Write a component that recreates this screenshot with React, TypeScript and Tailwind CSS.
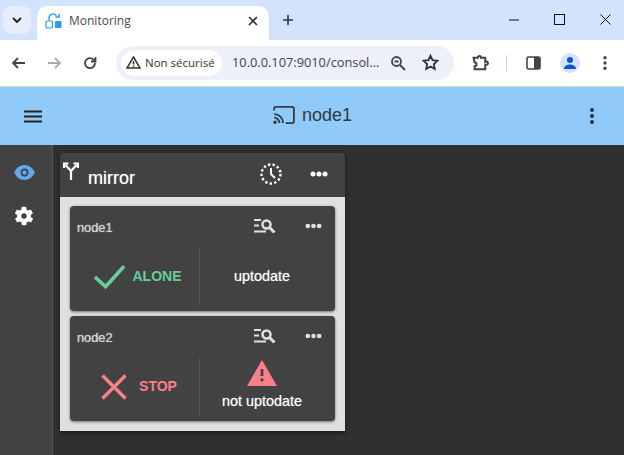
import React from "react";

const Dots = ({ c = "#fff", w = 18 }: { c?: string; w?: number }) => (
  <svg width={w} height={6} viewBox="0 0 18 6" fill={c}>
    <circle cx="3" cy="3" r="2.5" /><circle cx="9" cy="3" r="2.5" /><circle cx="15" cy="3" r="2.5" />
  </svg>
);

const VDots = ({ c = "#1f2937", h = 16 }: { c?: string; h?: number }) => (
  <svg width={4} height={h} viewBox="0 0 4 16" fill={c}>
    <circle cx="2" cy="2" r="1.9" /><circle cx="2" cy="8" r="1.9" /><circle cx="2" cy="14" r="1.9" />
  </svg>
);

const LogSearch = () => (
  <svg width="22" height="16" viewBox="0 0 22 16" fill="none" stroke="#e0e0e0">
    <path d="M0 2h7M0 7.500h5M0 13.500h12" strokeWidth="2" />
    <circle cx="12.500" cy="6.500" r="4" strokeWidth="2.500" />
    <path d="M15.500 9.500l5 5" strokeWidth="3" />
  </svg>
);

function NodeCard({ name, status, bad }: { name: string; status: string; bad?: boolean }) {
  return (
    <div className="h-[105px] rounded-[4px] bg-[#424242] shadow-[0_1px_3px_rgba(0,0,0,0.5)] flex flex-col">
      <div className="h-[42px] flex items-center pl-[7px] pr-[13px]">
        <span className="text-[#cfcfcf] text-[12.800px] flex-1 mt-[2px] [text-shadow:0_0_1px_rgba(255,255,255,0.8)]">{name}</span>
        <span className="mr-[29px] flex -mt-[2px]"><LogSearch /></span>
        <span className="flex -mt-[3px]"><Dots c="#e0e0e0" w={17} /></span>
      </div>
      <div className="flex h-[57px]">
        <div className={`w-[129px] flex items-center justify-center ${bad ? "gap-[12px] pl-[9px]" : "gap-[7px] pl-[5px]"}`}>
          {bad ? (
            <svg width="26" height="26" viewBox="0 0 26 26" stroke="#fb7f87" strokeWidth="3.400" fill="none">
              <path d="M1.500 1.500l23 23M24.500 1.500l-23 23" />
            </svg>
          ) : (
            <svg width="33" height="26" viewBox="0 0 34 26" stroke="#69cb98" strokeWidth="3.800" fill="none">
              <path d="M2 13l11 10L32 2" />
            </svg>
          )}
          <span className={`text-[14px] font-bold ${bad ? "text-[#fb7f87]" : "text-[#69cb98]"}`}>{status}</span>
        </div>
        <div className="w-px bg-[#555555]" />
        <div className={`flex-1 flex flex-col items-center ${bad ? "" : "justify-center"}`}>
          {bad ? (
            <>
              <svg width="30" height="26" viewBox="0 0 30 26" className="mt-[2px] -ml-[11px]">
                <path d="M15 0L30 26H0z" fill="#fb7f87" />
                <path d="M13.600 9h2.800v7h-2.800zM13.600 18.500h2.800v2.800h-2.800z" fill="#424242" />
              </svg>
              <span className="text-white text-[14.400px] leading-[18px] mt-[6px] -ml-[11px] [text-shadow:0_0_1px_rgba(255,255,255,0.6)]">not uptodate</span>
            </>
          ) : (
            <span className="text-white text-[14.400px] -ml-[11px] [text-shadow:0_0_1px_rgba(255,255,255,0.6)]">uptodate</span>
          )}
        </div>
      </div>
    </div>
  );
}

export default function App() {
  return (
    <div className="w-[624px] h-[455px] overflow-hidden flex flex-col bg-[#303030] font-['Liberation_Sans',Arial,sans-serif]">
      {/* tab strip */}
      <div className="h-[40px] bg-[#d3e3fd] flex items-end relative font-['Open_Sans','Liberation_Sans',sans-serif]">
        <div className="absolute left-[3px] top-[6px] w-[28px] h-[28px] rounded-[8px] bg-[#e6eefc] flex items-center justify-center">
          <svg width="10" height="7" viewBox="0 0 10 7" fill="none" stroke="#1f1f1f" strokeWidth="1.800"><path d="M1 1l4 4 4-4" /></svg>
        </div>
        <div className="ml-[37px] w-[232px] h-[34px] bg-white rounded-t-[10px] flex items-center pl-[8px] pr-[11px] pb-[4px]">
          <svg width="18" height="18" viewBox="0 0 18 18" fill="none" className="mr-[6px]">
            <rect x="1" y="9" width="6.500" height="7" rx="1" stroke="#2b9af3" strokeWidth="1.200" />
            <rect x="10" y="9" width="6.500" height="7" rx="1" fill="#2b9af3" />
            <path d="M4 8V6a4 4 0 0 1 7.500-2M14 1.500V5h-3.500" stroke="#2b9af3" strokeWidth="1.400" />
          </svg>
          <span className="text-[12px] text-[#4a4a4a] flex-1">Monitoring</span>
          <svg width="10" height="10" viewBox="0 0 10 10" stroke="#333" strokeWidth="1.700"><path d="M1 1l8 8M9 1l-8 8" /></svg>
        </div>
        <svg width="12" height="12" viewBox="0 0 12 12" stroke="#333" strokeWidth="1.600" className="ml-[13px] mb-[14px]"><path d="M6 1v10M1 6h10" /></svg>
        <svg width="12" height="2" viewBox="0 0 12 2" stroke="#111" className="absolute left-[508px] top-[19px]"><path d="M1 1h10" /></svg>
        <svg width="11" height="11" viewBox="0 0 11 11" fill="none" stroke="#111" className="absolute left-[554px] top-[14px]"><rect x="0.500" y="0.500" width="10" height="10" /></svg>
        <svg width="11" height="11" viewBox="0 0 11 11" stroke="#111" className="absolute left-[600px] top-[14px]"><path d="M0.500 0.500l10 10M10.500.5l-10 10" /></svg>
      </div>
      {/* toolbar */}
      <div className="h-[47px] bg-white border-b border-[#d8d8d8] flex items-center relative font-['Open_Sans','Liberation_Sans',sans-serif]">
        <svg width="14" height="12" viewBox="0 0 14 12" fill="none" stroke="#444" strokeWidth="1.800" className="ml-[12px]"><path d="M13 6H1.500M6 1L1 6l5 5" /></svg>
        <svg width="14" height="12" viewBox="0 0 14 12" fill="none" stroke="#aaa" strokeWidth="1.800" className="ml-[21px]"><path d="M1 6h11.500M8 1l5 5-5 5" /></svg>
        <svg width="14" height="14" viewBox="0 0 14 14" fill="none" stroke="#444" strokeWidth="1.800" className="ml-[22px]"><path d="M12 7a5 5 0 1 1-1.500-3.500L12.500 5.500M12.500 1v4.500H8" /></svg>
        <div className="ml-[19px] w-[338px] h-[34px] rounded-full bg-[#edf0f8] flex items-center pl-[5px] mt-[-1px]">
          <div className="h-[26px] w-[101px] bg-white rounded-full flex items-center pl-[5px] gap-[4px]">
            <svg width="15" height="13" viewBox="0 0 15 13" fill="none" stroke="#333" strokeWidth="1.500" className="shrink-0"><path d="M7.500 1L14 12H1zM7.500 5v3.500M7.500 9.500v1.200" /></svg>
            <span className="text-[11.500px] font-medium text-[#333] whitespace-nowrap">Non sécurisé</span>
          </div>
          <span className="ml-[10px] w-[151px] text-[12.800px] text-[#444] whitespace-nowrap">10.0.0.107:9010/consol...</span>
          <svg width="16" height="16" viewBox="0 0 16 16" fill="none" stroke="#444" strokeWidth="1.800" className="ml-[7px] shrink-0"><circle cx="6.500" cy="6.500" r="4.500" /><path d="M10 10l5 5M4.500 6.500h4" /></svg>
          <svg width="17" height="17" viewBox="0 0 24 24" fill="none" stroke="#333" strokeWidth="2.600" className="ml-[16px] shrink-0"><path d="M12 2.500l2.900 6.300 6.800.8-5 4.700 1.300 6.800-6-3.400-6 3.400 1.300-6.800-5-4.700 6.800-.8z" /></svg>
        </div>
        <svg width="18" height="18" viewBox="0 0 17 17" fill="none" stroke="#444" strokeWidth="1.900" className="ml-[18px]"><path d="M1.500 3.500h4a1.500 1.500 0 0 1 3 0h4v4a1.500 1.500 0 0 1 2 2.500l-2 .5v4h-10v-3a1.500 1.500 0 0 0 0-3.500z" /></svg>
        <div className="ml-[16px] w-px h-[16px] bg-[#c4d6f0]" />
        <svg width="15" height="14" viewBox="0 0 15 14" className="ml-[19px]"><rect x="1" y="1" width="13" height="12" rx="1.500" fill="none" stroke="#444" strokeWidth="1.600" /><rect x="8" y="1" width="6" height="12" fill="#444" /></svg>
        <div className="ml-[19px] w-[20px] h-[20px] rounded-full bg-[#d3e3fd] flex items-center justify-center">
          <svg width="14" height="14" viewBox="0 0 14 14" fill="#0b57d0"><circle cx="7" cy="4" r="3" /><path d="M1 13c0-3 3-4.500 6-4.500s6 1.500 6 4.500z" /></svg>
        </div>
        <span className="ml-[23px] flex"><VDots c="#444" h={14} /></span>
      </div>
      {/* app bar */}
      <div className="h-[58px] bg-[#90caf9] flex items-center relative shrink-0">
        <svg width="18" height="13" viewBox="0 0 18 13" stroke="#222" strokeWidth="1.900" className="ml-[24px]"><path d="M0 1.500h18M0 6.500h18M0 11.500h18" /></svg>
        <div className="absolute left-[273px] top-[19px] flex items-center gap-[7px]">
          <svg width="22" height="18" viewBox="0 0 24 20" fill="none" stroke="#2f3b45" strokeWidth="2">
            <path d="M1 5V3a2 2 0 0 1 2-2h18a2 2 0 0 1 2 2v14a2 2 0 0 1-2 2h-7" />
            <path d="M1 9a10 10 0 0 1 10 10M1 13a6 6 0 0 1 6 6" />
            <circle cx="2" cy="18" r="1" fill="#2f3b45" />
          </svg>
          <span className="text-[18px] text-[#2f3b45] leading-[18px]">node1</span>
        </div>
        <span className="absolute left-[590px] top-[21px] flex"><VDots c="#1c2730" /></span>
      </div>
      {/* body */}
      <div className="flex-1 flex min-h-0">
        <div className="w-[53px] bg-[#424242] border-r border-[#555555] flex flex-col items-center shrink-0 pt-[20px]">
          <svg width="21" height="15" viewBox="0 0 22 16" className="mr-[4px]"><path d="M11 0C6 0 2 3.200 0 8c2 4.800 6 8 11 8s9-3.200 11-8c-2-4.800-6-8-11-8z" fill="#64a8f0" /><circle cx="11" cy="8" r="4.200" fill="#424242" /><circle cx="11" cy="8" r="2.400" fill="#64a8f0" /></svg>
          <svg width="22" height="22" viewBox="0 0 24 24" fill="#fff" className="mt-[25px] mr-[4px]"><path d="M19.400 13a7.800 7.800 0 0 0 0-2l2.100-1.600a.5.5 0 0 0 .1-.6l-2-3.500a.5.5 0 0 0-.6-.2l-2.500 1a7.500 7.500 0 0 0-1.700-1l-.4-2.600a.5.5 0 0 0-.5-.5h-4a.5.5 0 0 0-.5.400l-.4 2.700a7.500 7.500 0 0 0-1.700 1l-2.500-1a.5.5 0 0 0-.6.2l-2 3.500a.5.5 0 0 0 .1.600L4.600 11a7.800 7.800 0 0 0 0 2l-2.100 1.600a.5.5 0 0 0-.1.600l2 3.500a.5.5 0 0 0 .6.2l2.500-1a7.500 7.500 0 0 0 1.700 1l.4 2.600a.5.5 0 0 0 .5.500h4a.5.5 0 0 0 .5-.4l.4-2.700a7.500 7.500 0 0 0 1.700-1l2.500 1a.5.5 0 0 0 .6-.2l2-3.500a.5.5 0 0 0-.1-.6zM12 15a3 3 0 1 1 0-6 3 3 0 0 1 0 6z" /></svg>
        </div>
        <div className="flex-1 pl-[7px] pt-[8px]">
          <div className="w-[285px] rounded-t-[4px] shadow-[0_2px_4px_rgba(0,0,0,0.5)]">
            <div className="h-[44px] bg-[#424242] rounded-t-[4px] flex items-center relative">
              <svg width="16" height="18" viewBox="0 0 16 18" fill="none" stroke="#fff" strokeWidth="2.200" className="absolute left-[3px] top-[9px]">
                <path d="M8 18V9L2.500 3M8 9l5.500-6M1 6V1.500h4.500M15 6V1.500h-4.500" />
              </svg>
              <span className="ml-[28px] mt-[7px] text-[18px] text-white [text-shadow:0_0_1px_rgba(255,255,255,0.6)]">mirror</span>
              <svg width="22" height="22" viewBox="0 0 22 22" fill="none" stroke="#fff" className="absolute left-[200px] top-[10px]">
                <circle cx="11" cy="11" r="9.500" strokeWidth="2.400" strokeDasharray="2.400 2.200" />
                <path d="M11 5v6l4 4" strokeWidth="2" />
              </svg>
              <span className="absolute left-[250px] top-[18px] flex"><Dots /></span>
            </div>
            <div className="bg-[#e0e0e0] px-[10px] pt-[9px] pb-[10px] flex flex-col gap-[5px]">
              <NodeCard name="node1" status="ALONE" />
              <NodeCard name="node2" status="STOP" bad />
            </div>
          </div>
        </div>
      </div>
    </div>
  );
}
